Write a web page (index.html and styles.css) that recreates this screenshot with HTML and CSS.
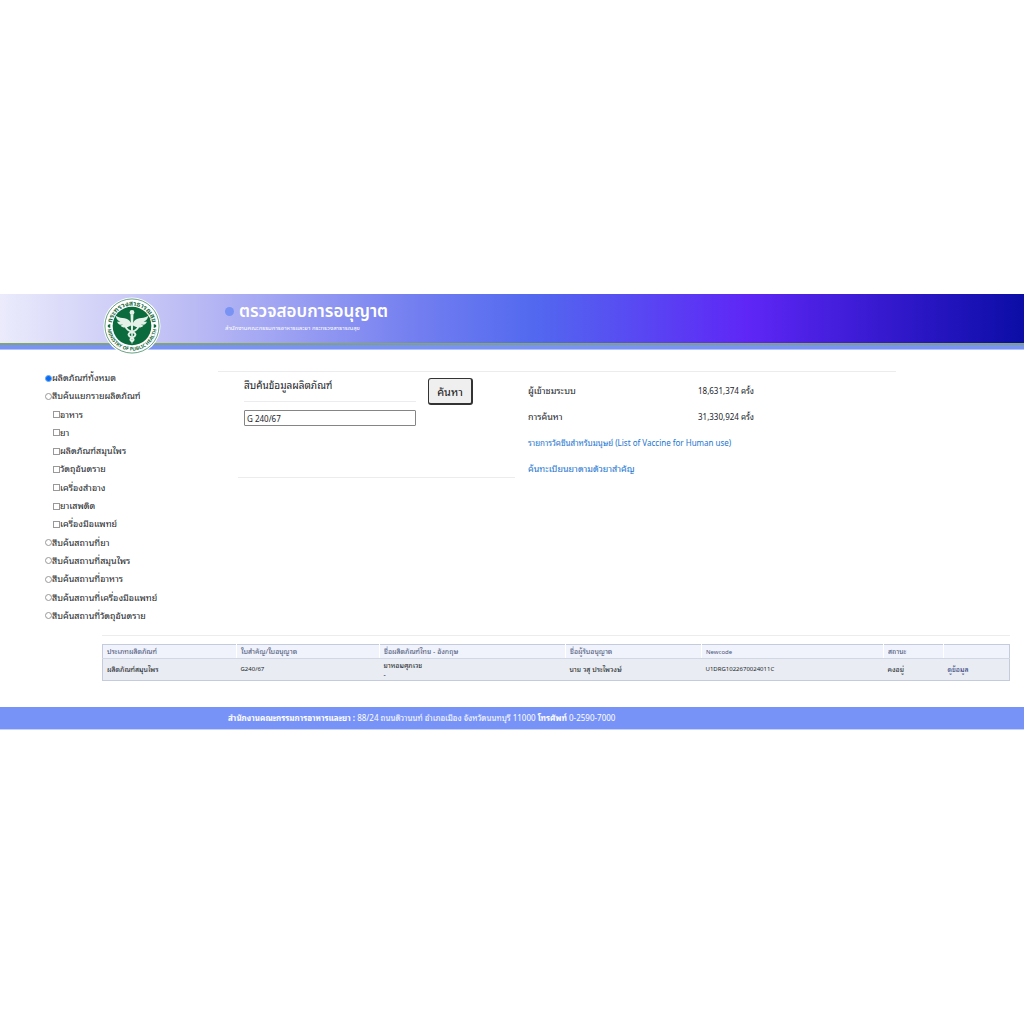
FILE: index.html
```
<!DOCTYPE html>
<html lang="th">
<head>
  <meta charset="utf-8">
  <title>ตรวจสอบการอนุญาต</title>
  <link rel="stylesheet" href="styles.css">
</head>
<body>
  <header class="banner">
    <svg class="logo" viewBox="0 0 120 120" role="img" aria-label="Ministry of Public Health">
      <defs>
        <path id="arcTop" d="M 18 60 A 42 42 0 0 1 102 60" />
        <path id="arcBottom" d="M 9 60 A 51 51 0 0 0 111 60" />
      </defs>
      <circle cx="60" cy="60" r="59" fill="#fff" />
      <circle cx="60" cy="60" r="56" fill="none" stroke="#2f7d55" stroke-width="1.5" />
      <circle cx="60" cy="60" r="40" fill="#0b6b3c" />
      <text class="logo-text" font-size="14" text-anchor="middle"><textPath href="#arcTop" startOffset="50%">กระทรวงสาธารณสุข</textPath></text>
      <text class="logo-text" font-size="10" text-anchor="middle"><textPath href="#arcBottom" startOffset="50%">MINISTRY OF PUBLIC HEALTH</textPath></text>
      <path d="M10 58l5-2v8l-5-2zM110 58l-5-2v8l5-2z" fill="#0b6b3c" />
      <!-- winged staff with two snakes -->
      <g fill="#e4f1e9">
        <circle cx="60" cy="32" r="5" />
        <path d="M57 36h6l-2 60h-2z" />
        <path d="M58 54C50 39 41 48 26 39c2 8 6 11 10 12c-3 1-5 0-7 0c3 6 7 7 12 6c-2 2-4 2-5 2c5 6 14 5 22 0z" />
        <path d="M62 54C70 39 79 48 94 39c-2 8-6 11-10 12c3 1 5 0 7 0c-3 6-7 7-12 6c2 2 4 2 5 2c-5 6-14 5-22 0z" />
      </g>
      <path d="M50 56c-5 6-3 11 10 16c11 4 8 9 0 12c-5 3-4 5 0 8M70 56c5 6 3 11-10 16c-11 4-8 9 0 12c5 3 4 5 0 8" fill="none" stroke="#e4f1e9" stroke-width="4" />
    </svg>
    <div class="banner-text">
      <h1>ตรวจสอบการอนุญาต</h1>
      <p>สำนักงานคณะกรรมการอาหารและยา กระทรวงสาธารณสุข</p>
    </div>
  </header>

  <form class="main">
    <div class="sidebar">
      <label><input type="radio" name="searchType" checked>ผลิตภัณฑ์ทั้งหมด</label>
      <label><input type="radio" name="searchType">สืบค้นแยกรายผลิตภัณฑ์</label>
      <label class="sub"><input type="checkbox">อาหาร</label>
      <label class="sub"><input type="checkbox">ยา</label>
      <label class="sub"><input type="checkbox">ผลิตภัณฑ์สมุนไพร</label>
      <label class="sub"><input type="checkbox">วัตถุอันตราย</label>
      <label class="sub"><input type="checkbox">เครื่องสำอาง</label>
      <label class="sub"><input type="checkbox">ยาเสพติด</label>
      <label class="sub"><input type="checkbox">เครื่องมือแพทย์</label>
      <label><input type="radio" name="searchType">สืบค้นสถานที่ยา</label>
      <label><input type="radio" name="searchType">สืบค้นสถานที่สมุนไพร</label>
      <label><input type="radio" name="searchType">สืบค้นสถานที่อาหาร</label>
      <label><input type="radio" name="searchType">สืบค้นสถานที่เครื่องมือแพทย์</label>
      <label><input type="radio" name="searchType">สืบค้นสถานที่วัตถุอันตราย</label>
    </div>

    <div class="content">
      <div class="search">
        <div class="search-field">
          <label for="keyword">สืบค้นข้อมูลผลิตภัณฑ์</label>
          <input type="text" id="keyword" value="G 240/67">
        </div>
        <button type="button">ค้นหา</button>
      </div>
      <div class="stats">
        <div class="stat"><span class="name">ผู้เข้าชมระบบ</span><span>18,631,374 ครั้ง</span></div>
        <div class="stat"><span class="name">การค้นหา</span><span>31,330,924 ครั้ง</span></div>
        <a href="#">รายการวัคซีนสำหรับมนุษย์ (List of Vaccine for Human use)</a>
        <a href="#" class="name">ค้นทะเบียนยาตามตัวยาสำคัญ</a>
      </div>
    </div>
  </form>

  <div class="results">
    <table>
      <colgroup>
        <col class="col-type">
        <col class="col-license">
        <col class="col-name">
        <col class="col-holder">
        <col class="col-code">
        <col class="col-status">
        <col class="col-view">
      </colgroup>
      <thead>
        <tr>
          <th>ประเภทผลิตภัณฑ์</th>
          <th>ใบสำคัญ/ใบอนุญาต</th>
          <th>ชื่อผลิตภัณฑ์ไทย - อังกฤษ</th>
          <th>ชื่อผู้รับอนุญาต</th>
          <th class="code">Newcode</th>
          <th>สถานะ</th>
          <th></th>
        </tr>
      </thead>
      <tbody>
        <tr>
          <td>ผลิตภัณฑ์สมุนไพร</td>
          <td class="code">G240/67</td>
          <td>ยาหอมศุภเวช<br>-</td>
          <td>นาย วสุ ประไพวงษ์</td>
          <td class="code">U1DRG1022670024011C</td>
          <td>คงอยู่</td>
          <td><a href="#">ดูข้อมูล</a></td>
        </tr>
      </tbody>
    </table>
  </div>

  <footer class="footer">
    <b>สำนักงานคณะกรรมการอาหารและยา :</b> 88/24 ถนนติวานนท์ อำเภอเมือง จังหวัดนนทบุรี 11000 <b>โทรศัพท์</b> 0-2590-7000
  </footer>
</body>
</html>
```
FILE: styles.css
```
* {
  box-sizing: border-box;
}
body {
  margin: 0;
  min-height: 100vh;
  display: flex;
  flex-direction: column;
  justify-content: center;
  background-color: #fff;
  color: #212529;
  font-family: "Noto Sans", "Noto Sans Thai Looped", sans-serif;
  font-size: 8px;
}
a {
  color: #1b75d0;
  text-decoration: none;
}

/* banner */
.banner {
  display: flex;
  height: 56px;
  padding-left: 103px;
  background:
    linear-gradient(#86ab62, #7c9c8e) 0 49px / 100% 2px no-repeat,
    linear-gradient(#7893f4, #7893f4) 0 51px / 100% 4px no-repeat,
    linear-gradient(#b4c3f9, #b4c3f9) 0 55px / 100% 1px no-repeat,
    linear-gradient(90deg, #ebebfc 0%, #babaf4 19%, #7580f0 40%, #5269ef 52%, #5f26f6 73%, #0b0da6 100%);
}
.logo {
  flex: none;
  width: 58px;
  height: 58px;
  margin-top: 3px;
}
.logo-text {
  fill: #1d6b43;
  font-weight: bold;
}
.banner-text {
  margin-left: 64px;
  padding-top: 6px;
  color: #fff;
  font-family: "Noto Sans", "Noto Sans Thai", sans-serif;
}
.banner-text h1 {
  display: flex;
  align-items: center;
  gap: 5px;
  margin: 0;
  font-size: 17px;
  line-height: 22px;
  font-weight: 600;
}
.banner-text h1::before {
  content: "";
  width: 9px;
  height: 9px;
  border-radius: 50%;
  background-color: #7893f4;
}
.banner-text p {
  margin: 0;
  font-size: 6px;
  line-height: 12px;
}

/* search form */
.main {
  display: flex;
  padding: 19px 128px 0 45px;
}
.sidebar {
  display: flex;
  flex-direction: column;
  justify-content: space-between;
  flex: none;
  width: 173px;
  min-height: 256px;
  font-size: 9px;
}
.sidebar label {
  display: flex;
  align-items: center;
  line-height: 18px;
}
.sidebar .sub {
  padding-left: 8px;
}
.sidebar input {
  appearance: none;
  width: 7px;
  height: 7px;
  margin: 0;
  border: 1px solid #999;
  background-color: #fff;
}
.sidebar input[type="radio"] {
  border-radius: 50%;
}
.sidebar input:checked {
  border-color: #69a9f8;
  background-color: #0b6cf0;
}
.content {
  flex: 1;
  display: flex;
  align-items: flex-start;
  margin-top: 2px;
  padding-left: 20px;
  border-top: 1px solid #ececee;
}
.search {
  display: flex;
  align-items: flex-start;
  flex: none;
  gap: 12px;
  width: 277px;
  height: 106px;
  padding: 6px 6px 0;
  border-bottom: 1px solid #ececee;
}
.search-field {
  width: 172px;
}
.search-field label {
  display: block;
  height: 24px;
  margin-bottom: 8px;
  border-bottom: 1px solid #ececee;
  font-size: 10px;
  line-height: 14px;
}
.search-field input {
  display: block;
  width: 100%;
  height: 16px;
  padding: 0 2px;
  border: 1px solid #858585;
  border-radius: 1px;
  color: #212529;
  font-family: inherit;
  font-size: 8px;
}
.search button {
  width: 45px;
  height: 27px;
  padding: 0;
  border: 1px solid #333;
  border-width: 1px 2px 2px 1px;
  border-radius: 3px;
  background-color: #efefef;
  color: #111;
  font-family: inherit;
  font-size: 11px;
}
.stats {
  flex: 1;
  padding: 6px 0 0 13px;
  line-height: 26px;
}
.stats .name {
  font-size: 9px;
}
.stat {
  display: grid;
  grid-template-columns: 170px 1fr;
}
.stats a {
  display: block;
}

/* results table */
.results {
  margin: 10px 14px 0 102px;
  padding-top: 8px;
  border-top: 1px solid #ececee;
}
.results table {
  width: 100%;
  table-layout: fixed;
  border-collapse: collapse;
  border: 1px solid #c3cbdc;
  font-size: 7px;
}
.results th {
  height: 14px;
  padding: 0 4px;
  border-left: 1px solid #fff;
  border-bottom: 1px solid #d0d8e4;
  background-color: #f0f3fc;
  color: #4a5578;
  font-weight: normal;
  line-height: 12px;
  text-align: left;
}
.results th:first-child {
  border-left-color: #c3cbdc;
}
.results td {
  height: 22px;
  padding: 0 4px;
  background-color: #e9edf3;
  line-height: 9px;
}
.results .code {
  font-size: 6px;
}
.results td a {
  color: #34427d;
}
.col-type { width: 134px; }
.col-license { width: 143px; }
.col-name { width: 186px; }
.col-holder { width: 136px; }
.col-code { width: 182px; }
.col-status { width: 60px; }
.col-view { width: 66px; }

.footer {
  margin-top: 26px;
  padding-left: 228px;
  border-bottom: 1px solid #c5d0fb;
  background-color: #7893f7;
  color: #fff;
  line-height: 22px;
}
```
